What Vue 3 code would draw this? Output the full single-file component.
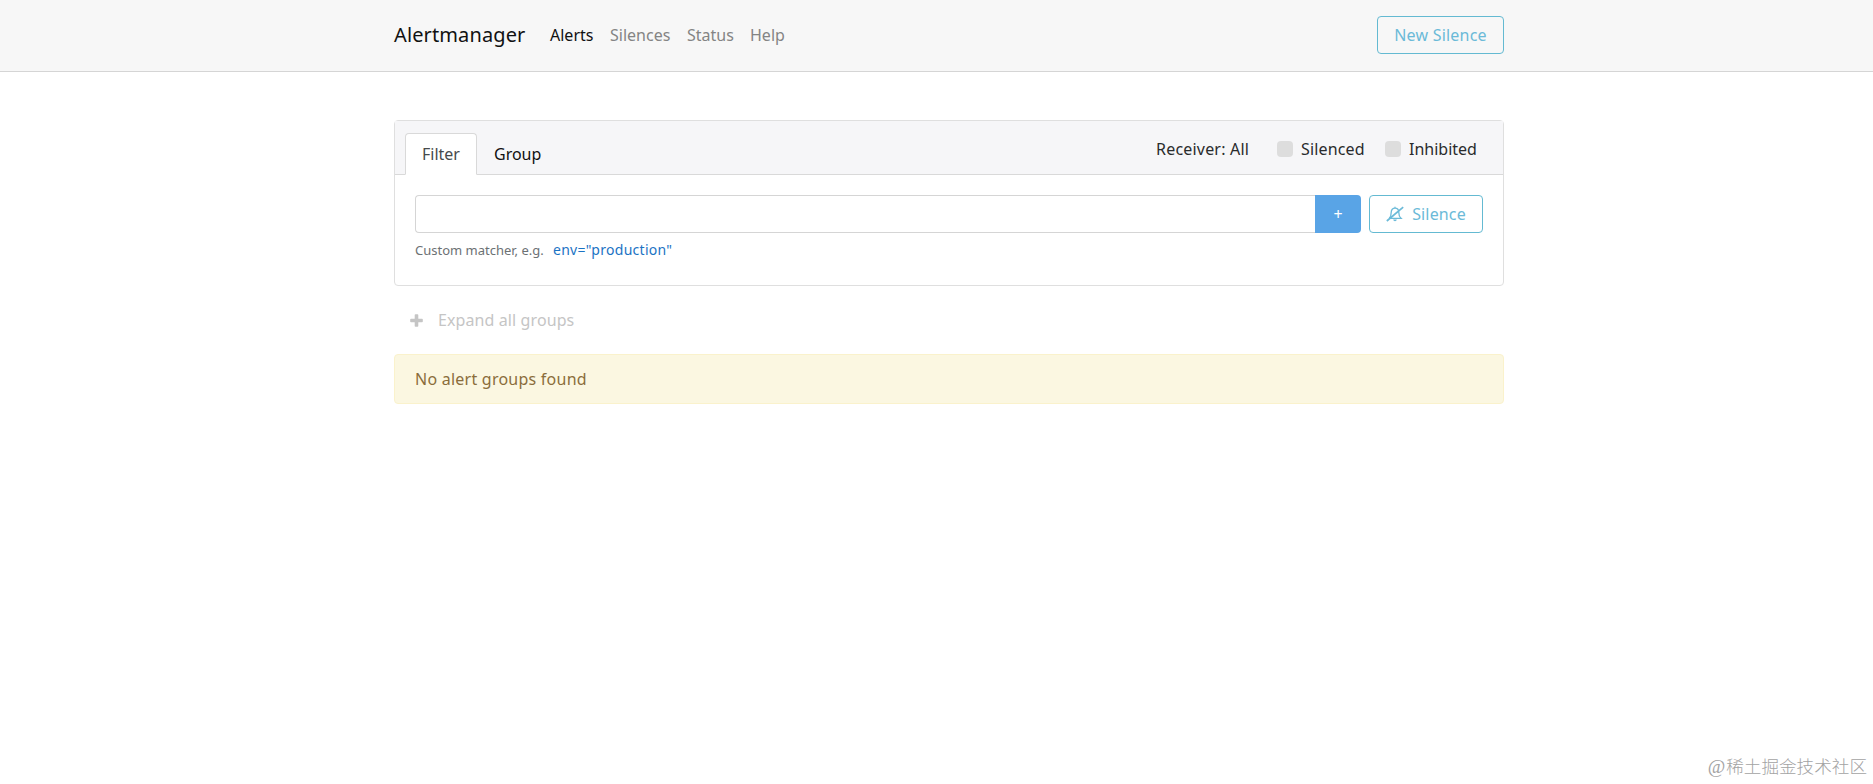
<template>
  <nav class="navbar">
    <div class="container nav-inner">
      <a class="brand">Alertmanager</a>
      <a v-for="link in links" :key="link" class="nav-link" :class="[{ active: link === current }, link.toLowerCase()]">{{ link }}</a>
      <button class="btn btn-new">New Silence</button>
    </div>
  </nav>

  <main class="container">
    <div class="card">
      <div class="card-header">
        <div class="tabs">
          <a class="tab" :class="{ active: tab === 'filter' }" @click="tab = 'filter'">Filter</a>
          <a class="tab group" :class="{ active: tab === 'group' }" @click="tab = 'group'">Group</a>
        </div>
        <div class="options">
          <span class="receiver">Receiver: All</span>
          <label class="check"><i class="box" /><span class="silenced">Silenced</span></label>
          <label class="check"><i class="box" /><span class="inhibited">Inhibited</span></label>
        </div>
      </div>

      <div class="card-body">
        <div class="filter-row">
          <input v-model="matcher" class="matcher" type="text">
          <button class="btn-add">+</button>
          <button class="btn btn-silence">
            <svg class="bell" viewBox="0 0 18 16" fill="none" stroke="currentColor">
              <path d="M3.2 12.2C4.9 10.8 5.2 9 5.2 6.4C5.2 3.7 6.8 2.2 9 2.2S12.8 3.7 12.8 6.4C12.8 9 13.3 10.8 15 12.3H3.4M9 2.2V.8" stroke-width="1.3" />
              <path d="M7.2 13.6h3.6c-.2 1.1-.9 1.6-1.8 1.6s-1.6-.5-1.8-1.6z" fill="currentColor" stroke="none" />
              <path d="M.8 15L17.2 1.2" stroke-width="1.7" />
            </svg>
            <span>Silence</span>
          </button>
        </div>
        <div class="hint">
          <span class="hint-label">Custom matcher, e.g.</span>
          <a class="hint-example">env="production"</a>
        </div>
      </div>
    </div>

    <button class="expand">
      <svg class="plus" viewBox="0 0 13 13"><path d="M4.7 1q0-.8.8-.8h2q.8 0 .8.8v3.7H12q.8 0 .8.8v2q0 .8-.8.8H8.3V12q0 .8-.8.8h-2q-.8 0-.8-.8V8.3H1q-.8 0-.8-.8v-2q0-.8.8-.8h3.7z" fill="currentColor" /></svg>
      <span>Expand all groups</span>
    </button>

    <div class="alert"><span>No alert groups found</span></div>
  </main>

  <div class="watermark"><span class="at">@</span>稀土掘金技术社区</div>
</template>

<script setup>
import { ref } from 'vue'

const links = ['Alerts', 'Silences', 'Status', 'Help']
const current = 'Alerts'
const tab = ref('filter')
const matcher = ref('')
</script>

<style>
body { background: #fff; }
#app {
  position: relative;
  height: 784px;
  overflow: hidden;
  font-family: "Noto Sans", "Open Sans", sans-serif;
  font-size: 16px;
  line-height: 24px;
  color: #292b2c;
}
</style>

<style scoped>
* { box-sizing: border-box; }
button, input { font: inherit; letter-spacing: inherit; margin: 0; outline: none; }
a, span, button { white-space: nowrap; }

.container { width: 1110px; margin-left: 394px; }

.navbar { height: 72px; background: #f7f7f7; border-bottom: 1px solid #d5d5d5; }
.nav-inner { display: flex; align-items: center; height: 70px; }
.brand { width: 132px; margin-right: 24px; font-size: 20px; line-height: 30px; letter-spacing: .12px; color: #111; }
.nav-link { margin-right: 16px; color: #848484; }
.nav-link.active { color: #111; }
.nav-link.alerts { width: 44px; }
.nav-link.silences { width: 61px; }
.nav-link.status { width: 47px; }
.nav-link.help { width: 36px; }

.btn {
  display: flex; align-items: center; justify-content: center;
  height: 38px; padding: 0; border: 1px solid #64bad2;
  border-radius: 4px; background: transparent; color: #6bbad8;
}
.btn-new { width: 127px; margin-left: auto; letter-spacing: .22px; }

.card { height: 166px; margin-top: 48px; border: 1px solid #dfdfdf; border-radius: 4px; }
.card-header {
  display: flex; justify-content: space-between;
  height: 54px; padding: 12px 26px 0 10px;
  background: #f6f6f8; border-bottom: 1px solid #d9d9d9;
}
.tabs { display: flex; }
.tab { width: 72px; height: 42px; padding: 8px 16px; border: 1px solid transparent; border-radius: 4px 4px 0 0; color: #111; }
.tab.active { background: #fff; border-color: #d9d9d9; border-bottom-color: #fff; color: #464a4c; }
.options { display: flex; height: 32px; align-items: center; }
.receiver { width: 93px; margin-right: 28px; letter-spacing: .2px; }
.check { display: flex; align-items: center; }
.check + .check { margin-left: 20px; }
.box { width: 16px; height: 16px; margin-right: 8px; border-radius: 4px; background: #ddd; }
.silenced { width: 64px; letter-spacing: .15px; }
.inhibited { width: 68px; }

.card-body { padding: 20px; }
.filter-row { display: flex; }
.matcher { width: 900px; height: 38px; padding: 0 12px; border: 1px solid #d5d5d5; border-right: 0; border-radius: 4px 0 0 4px; background: #fff; }
.btn-add { width: 46px; height: 38px; padding: 0; border: 0; border-radius: 0 4px 4px 0; background: #59a4e6; color: #fff; }
.btn-silence { width: 114px; margin-left: 8px; letter-spacing: .14px; }
.bell { width: 18px; height: 16px; margin-right: 8px; }
.hint { display: flex; align-items: baseline; margin-top: 5px; }
.hint-label { width: 138px; font-size: 13px; color: #6c7174; }
.hint-example { font-size: 14px; letter-spacing: .28px; color: #1b73c4; }

.expand { display: flex; align-items: center; height: 40px; margin-top: 14px; padding: 0 16px; border: 0; background: none; letter-spacing: .1px; color: #c5c5c5; }
.plus { width: 13px; height: 13px; margin-right: 15px; }
.alert { height: 50px; margin-top: 14px; padding: 12px 20px; border: 1px solid #faf2cc; border-radius: 4px; background: #fbf7e1; letter-spacing: .24px; color: #8a6d3b; }

.watermark {
  position: absolute; right: 6px; bottom: 4px;
  font: 300 17.6px/26px "Liberation Serif", "Noto Sans CJK SC", sans-serif;
  color: #a3a3a3;
}
.at { margin-right: 1px; font-size: 19px; }
</style>
